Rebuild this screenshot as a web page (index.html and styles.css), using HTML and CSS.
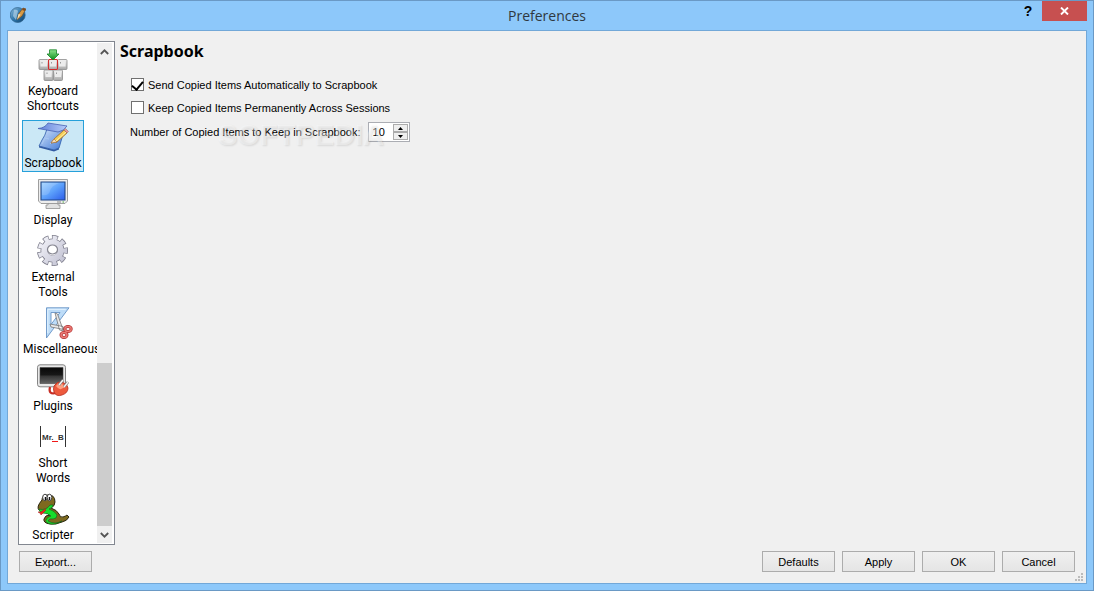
FILE: index.html
```html
<!DOCTYPE html>
<html lang="en">
<head>
    <meta charset="UTF-8">
    <meta name="viewport" content="width=device-width, initial-scale=1.0">
    <title>Preferences</title>
    <link rel="stylesheet" href="styles.css">
</head>
<body>
    <div class="window">

        <header class="titlebar">
            <svg class="app-icon" width="16" height="16" viewBox="0 0 16 16">
                <defs>
                    <linearGradient id="globe" x1="0" y1="0" x2="1" y2="1">
                        <stop offset="0" stop-color="#8fbcdc"/>
                        <stop offset=".5" stop-color="#2f78ad"/>
                        <stop offset="1" stop-color="#0c3f6c"/>
                    </linearGradient>
                </defs>
                <circle cx="7.7" cy="8" r="7.5" fill="url(#globe)" stroke="#30648c" stroke-width=".7"/>
                <path d="M4 3q3-1 4 1L6 13 3 9z" fill="#b9d7eb" opacity=".65"/>
                <path d="M7 13 8.500 7 13 1l3 1-4 7z" fill="#d79a45" stroke="#654521" stroke-width=".6"/>
                <path d="M7 13 8.500 7l2 .5z" fill="#f3e2bd"/>
                <path d="M13 1l3 1-1 2-3-1z" fill="#7a4a22"/>
            </svg>
            <h1 class="title">Preferences</h1>
            <div class="window-buttons">
                <button class="help" type="button" aria-label="Help">?</button>
                <button class="close" type="button" aria-label="Close">
                    <svg width="9" height="8" viewBox="0 0 9 8"><path d="M1 .5 8 7.500M8 .5 1 7.500" stroke="#fff" stroke-width="1.900"/></svg>
                </button>
            </div>
        </header>

        <div class="dialog">
            <div class="content">

                <div class="sidebar">
                    <nav class="sections">
                        <a class="section" href="#keyboard">
                            <svg class="icon" viewBox="0 0 32 32">
                                <defs>
                                    <linearGradient id="key" x1="0" y1="0" x2="0" y2="1">
                                        <stop offset="0" stop-color="#f4f4f4"/>
                                        <stop offset="1" stop-color="#a8a8a8"/>
                                    </linearGradient>
                                    <linearGradient id="down" x1="0" y1="0" x2="0" y2="1">
                                        <stop offset="0" stop-color="#8de28d"/>
                                        <stop offset="1" stop-color="#0a8f18"/>
                                    </linearGradient>
                                </defs>
                                <g fill="url(#key)" stroke="#8c8c8c" stroke-width=".8">
                                    <rect x="2" y="10.500" width="9.500" height="10" rx="1"/>
                                    <rect x="20.500" y="10.500" width="9.500" height="10" rx="1"/>
                                    <rect x="7" y="21" width="9" height="10.500" rx="1"/>
                                    <rect x="16.500" y="21" width="9" height="10.500" rx="1"/>
                                </g>
                                <rect x="11.500" y="10.500" width="9" height="10" rx="1" fill="url(#key)" stroke="#d22c2c" stroke-width="1.100"/>
                                <path d="M3.500 11.500h6.500v6H3.500zM22 11.500h6.500v6H22zM8.500 22h6v6h-6zM18 22h6v6h-6zM13 11.500h6v6h-6z" fill="#ececec"/>
                                <path d="M5 13v1.500M23.500 13v1.500M10 23.500V25M19.500 23.500V25M14.500 13v1.500" stroke="#999"/>
                                <path d="M12.500.8h7V5H22l-6 6-6-6h2.500z" fill="url(#down)" stroke="#19832a" stroke-width=".8"/>
                            </svg>
                            <span>Keyboard<br>Shortcuts</span>
                        </a>

                        <a class="section selected" href="#scrapbook" aria-current="page">
                            <svg class="icon" viewBox="0 0 32 32">
                                <defs>
                                    <linearGradient id="pad" x1="0" y1="0" x2="1" y2="1">
                                        <stop offset="0" stop-color="#d4e4fb"/>
                                        <stop offset="1" stop-color="#3f78d4"/>
                                    </linearGradient>
                                    <linearGradient id="flap" x1="0" y1="0" x2="1" y2="0">
                                        <stop offset="0" stop-color="#5f7fd8"/>
                                        <stop offset="1" stop-color="#b7cdfa"/>
                                    </linearGradient>
                                </defs>
                                <path d="M10 8Q8 15 5 19L2 25l15 4 5-2 5-17z" fill="url(#pad)" stroke="#2c5ca9" stroke-width=".8"/>
                                <path d="M2 25v1.500l15 4 5-2V27l-5 2z" fill="#3159a2"/>
                                <path d="M1 7.500Q8 7 11 2l19 3q-3 5-9 6z" fill="url(#flap)" stroke="#4661b2" stroke-width=".8"/>
                                <path d="M5 23 8 17l4 1M13 23l6-7" fill="none" stroke="#a9c8f2"/>
                                <path d="m14 22 3-4L27 9l3 3-10 9z" fill="#f6cf58" stroke="#9b672b" stroke-width=".8"/>
                                <path d="M19 20 29 11" stroke="#fff1a7"/>
                                <path d="m14 22 3-4 3 3z" fill="#f6dfc0" stroke="#9b672b" stroke-width=".5"/>
                                <path d="m27 9 1.500-1.500 3 3L30 12z" fill="#e59898" stroke="#9b6060" stroke-width=".5"/>
                            </svg>
                            <span>Scrapbook</span>
                        </a>

                        <a class="section" href="#display">
                            <svg class="icon" viewBox="0 0 32 32">
                                <defs>
                                    <linearGradient id="screen" x1="0" y1="0" x2="1" y2="1">
                                        <stop offset="0" stop-color="#a2d4ff"/>
                                        <stop offset=".5" stop-color="#5da1fb"/>
                                        <stop offset="1" stop-color="#2b5cea"/>
                                    </linearGradient>
                                </defs>
                                <path d="M11 24h10v3h2v3.500H9V27h2z" fill="#e2e2e2" stroke="#929292" stroke-width=".8"/>
                                <path d="M1.500 1.500h29V23L28 25.500H4L1.500 23z" fill="#ededed" stroke="#949494" stroke-width=".9"/>
                                <path d="M4 4h24v18H4z" fill="url(#screen)" stroke="#214785" stroke-width="1.100"/>
                                <path d="M5 5h17q-8 3-9 8T5 17z" fill="#fff" opacity=".15"/>
                                <path d="M20 24h4" stroke="#8b8b8b"/>
                                <path d="M25.500 24h1.500" stroke="#4dac43"/>
                            </svg>
                            <span>Display</span>
                        </a>

                        <a class="section" href="#tools">
                            <svg class="icon" viewBox="0 0 32 32">
                                <defs>
                                    <linearGradient id="gear" gradientUnits="userSpaceOnUse" x1="4" y1="2" x2="28" y2="30">
                                        <stop offset="0" stop-color="#f4f4fa"/>
                                        <stop offset="1" stop-color="#bfbfd0"/>
                                    </linearGradient>
                                </defs>
                                <!-- teeth are a dashed ring, darker copy below for the outline -->
                                <g fill="none" transform="rotate(-12 15.500 15.500)">
                                    <circle cx="15.500" cy="15.500" r="12.500" pathLength="90" stroke="#7e7e8c" stroke-width="6" stroke-dasharray="6.400 3.600"/>
                                    <circle cx="15.500" cy="15.500" r="8.500" stroke="#7e7e8c" stroke-width="7"/>
                                    <circle cx="15.500" cy="15.500" r="12.200" pathLength="90" stroke="url(#gear)" stroke-width="5" stroke-dasharray="5 5" stroke-dashoffset="-.7"/>
                                    <circle cx="15.500" cy="15.500" r="8.200" stroke="url(#gear)" stroke-width="6"/>
                                </g>
                                <ellipse cx="15.500" cy="14.500" rx="5" ry="4.500" fill="#fff" stroke="#858590" stroke-width="1.200"/>
                            </svg>
                            <span>External<br>Tools</span>
                        </a>

                        <a class="section" href="#misc">
                            <svg class="icon" viewBox="0 0 32 32">
                                <path fill-rule="evenodd" d="M9.500.8H32L9.500 31zM14 5.500v12L23 5.500z" fill="#bddcf8" stroke="#6693c5" stroke-width=".9"/>
                                <path d="M10.800 26V2.300h18" fill="none" stroke="#e5f4ff"/>
                                <path d="m18 6 2.500 1 6 17-4-1zM13 17l1 3 13 2.500-1-3z" fill="#e8e8e8" stroke="#777" stroke-width=".8"/>
                                <g fill="none" stroke="#b02e2e" stroke-width="3">
                                    <ellipse cx="31" cy="22" rx="3.200" ry="2.500"/>
                                    <ellipse cx="27" cy="28" rx="3" ry="2.500"/>
                                </g>
                                <g fill="none" stroke="#ec7b76" stroke-width="1.400">
                                    <ellipse cx="31" cy="22" rx="3.200" ry="2.500"/>
                                    <ellipse cx="27" cy="28" rx="3" ry="2.500"/>
                                </g>
                            </svg>
                            <span>Miscellaneous</span>
                        </a>

                        <a class="section" href="#plugins">
                            <svg class="icon" viewBox="0 0 32 32">
                                <defs>
                                    <linearGradient id="dark" x1="0" y1="0" x2="0" y2="1">
                                        <stop offset="0" stop-color="#080808"/>
                                        <stop offset=".45" stop-color="#171717"/>
                                        <stop offset=".55" stop-color="#363636"/>
                                        <stop offset="1" stop-color="#646464"/>
                                    </linearGradient>
                                </defs>
                                <rect x=".5" y=".8" width="28" height="22" rx="2.500" fill="#e8e8e8" stroke="#858585"/>
                                <path d="M3 3.500h23v16H3z" fill="url(#dark)" stroke="#444" stroke-width=".6"/>
                                <path d="M13 23q-2 8 6 6" fill="none" stroke="#c72d24" stroke-width="2.200"/>
                                <path d="M17 22q3-5 8-4 6 2 6 6 0 5-6 7t-8-3q-1-3 0-6z" fill="#ed5a3d" stroke="#b52c20" stroke-width=".8"/>
                                <path d="M19 22q3-4 6-2l4 3q-3 1-5 2t-5-3z" fill="#ff9f80"/>
                                <path d="m22 21 4-5M27 23l4-5" stroke="#777" stroke-width="2.800"/>
                                <path d="m22 21 4-5M27 23l4-5" stroke="#f2f2f2" stroke-width="1.500"/>
                            </svg>
                            <span>Plugins</span>
                        </a>

                        <a class="section" href="#short-words">
                            <svg class="icon" viewBox="0 0 32 32">
                                <path d="M3.500 5v21M28.500 5v21" stroke="#333"/>
                                <text class="icon-text" x="5" y="19">Mr.</text>
                                <text class="icon-text" x="21" y="19">B</text>
                                <path d="M15 20.500h6" stroke="#f01818"/>
                            </svg>
                            <span>Short<br>Words</span>
                        </a>

                        <a class="section" href="#scripter">
                            <svg class="icon" viewBox="0 0 32 32">
                                <!-- body -->
                                <path d="M5 7q0-5 5-5 8-1 8 7 0 4-4 6 6 2 8 6 1 4 4 3 3-1 4-2l2 2q-2 4-7 5-7 3-12 2-7-1-6-5 1-4 6-4-4-3-11-5-3-3 3-10z" fill="#7d691f" stroke="#2b2810"/>
                                <!-- belly -->
                                <path d="M2 16q7 2 11-4l3 0q0 3-4 4 6 2 8 6 0 4-4 4-4-1-5 2 7 4 14 0-6 4-11 3-6-1-5-4t5-4q-3-3-9-3-3-1-3-4z" fill="#16dd2b" stroke="#155f1b" stroke-width=".6"/>
                                <ellipse cx="8" cy="4.500" rx="2.300" ry="3.300" fill="#fff" stroke="#444"/>
                                <ellipse cx="12.500" cy="4.500" rx="2.300" ry="3.300" fill="#fff" stroke="#444"/>
                                <path d="M8.500 4v3M12.500 4v3" stroke="#111" stroke-width="1.500"/>
                                <path d="m8 16-4 3H1l2 1 1 2 5-5z" fill="#ed2424" stroke="#a51919" stroke-width=".5"/>
                            </svg>
                            <span>Scripter</span>
                        </a>
                    </nav>

                    <div class="scrollbar">
                        <button type="button" aria-label="Scroll up">
                            <svg width="9" height="6" viewBox="0 0 9 6"><path d="M.8 5 4.500 1.300 8.200 5" fill="none" stroke="#555" stroke-width="1.800"/></svg>
                        </button>
                        <div class="track"><div class="thumb"></div></div>
                        <button type="button" aria-label="Scroll down">
                            <svg width="9" height="6" viewBox="0 0 9 6"><path d="M.8 1 4.500 4.700 8.200 1" fill="none" stroke="#555" stroke-width="1.800"/></svg>
                        </button>
                    </div>
                </div>

                <main class="panel">
                    <h2>Scrapbook</h2>
                    <div class="options">
                        <label class="check"><input type="checkbox" checked>Send Copied Items Automatically to Scrapbook</label>
                        <label class="check"><input type="checkbox">Keep Copied Items Permanently Across Sessions</label>
                        <div class="number-row">
                            <label for="copies">Number of Copied Items to Keep in Scrapbook:</label>
                            <div class="spinner">
                                <input id="copies" type="number" value="10">
                                <div class="steps">
                                    <button type="button" aria-label="Increase"><svg width="5" height="3" viewBox="0 0 5 3"><path d="M0 3h5L2.500 0z"/></svg></button>
                                    <button type="button" aria-label="Decrease"><svg width="5" height="3" viewBox="0 0 5 3"><path d="M0 0h5L2.500 3z"/></svg></button>
                                </div>
                            </div>
                            <span class="watermark">SOFTPEDIA</span>
                        </div>
                    </div>
                </main>
            </div>

            <footer class="actions">
                <button class="export" type="button">Export...</button>
                <button type="button">Defaults</button>
                <button type="button">Apply</button>
                <button type="button">OK</button>
                <button type="button">Cancel</button>
            </footer>
            <svg class="grip" width="8" height="8" viewBox="0 0 8 8"><path d="M6 0h2v2H6zM3 3h2v2H3zM6 3h2v2H6zM0 6h2v2H0zM3 6h2v2H3zM6 6h2v2H6z" fill="#bbb"/></svg>
        </div>
    </div>
</body>
</html>
```

FILE: styles.css
```css
* {
    box-sizing: border-box;
}

body {
    margin: 0;
    font-family: "Liberation Sans", Arial, sans-serif;
    font-size: 11px;
    color: #000;
}

button {
    padding: 0;
    font: inherit;
    color: inherit;
}

.window {
    display: flex;
    flex-direction: column;
    height: 100vh;
    padding: 0 6px 6px;
    border: 1px solid #6a99c5;
    background: #8dc8fa;
}

/* title bar */
.titlebar {
    display: grid;
    grid-template-columns: 1fr auto 1fr;
    height: 29px;
    flex: none;
}

.app-icon {
    margin: 6px 0 0 3px;
}

.title {
    margin: 0;
    font: 14px/29px "Open Sans", sans-serif;
    color: #303840;
}

.window-buttons {
    display: flex;
    justify-content: flex-end;
    align-items: flex-start;
}

.window-buttons button {
    border: 0;
    height: 20px;
}

.help {
    width: 28px;
    background: none;
    font-size: 14px;
    font-weight: bold;
}

.window-buttons .close {
    width: 45px;
    background: #c75050;
}

/* dialog */
.dialog {
    position: relative;
    display: flex;
    flex-direction: column;
    flex: 1;
    min-height: 0;
    padding: 10px 10px 11px;
    border: 1px solid #72a8d8;
    background: #f0f0f0;
}

.content {
    display: flex;
    flex: 1;
    min-height: 0;
    gap: 5px;
}

.sidebar {
    display: flex;
    width: 97px;
    padding: 1px 2px 1px 0;
    border: 1px solid #828790;
    background: #fff;
}

.sections {
    display: flex;
    flex-direction: column;
    gap: 5px;
    flex: 1;
    min-width: 0;
    padding: 5px 0 0 3px;
    overflow: hidden;
}

.section {
    flex: none;
    width: 62px;
    border: 1px solid transparent;
    font: 12px/15px Roboto, sans-serif;
    text-align: center;
    text-decoration: none;
    color: #000;
}

.section.selected {
    border-color: #26a0da;
    background: #cbe8f6;
}

.section span {
    display: block;
    padding-top: 3px;
}

.icon {
    display: block;
    width: 32px;
    height: 32px;
    margin: 0 auto;
    overflow: visible;
}

.icon-text {
    font: bold 8px "Liberation Sans", sans-serif;
    fill: #333;
}

.scrollbar {
    display: flex;
    flex-direction: column;
    width: 15px;
    background: #f0f0f0;
}

.scrollbar button {
    display: flex;
    align-items: center;
    justify-content: center;
    height: 17px;
    border: 0;
    background: none;
}

.track {
    display: flex;
    flex-direction: column;
    justify-content: flex-end;
    flex: 1;
}

.thumb {
    height: 35%;
    background: #cdcdcd;
}

/* options */
.panel {
    flex: 1;
}

.panel h2 {
    margin: 0;
    font: bold 16px/20px "Noto Sans", sans-serif;
}

.options {
    padding: 12px 10px;
}

.check {
    display: flex;
    align-items: center;
    gap: 4px;
    height: 23px;
    padding-left: 1px;
}

.check input {
    appearance: none;
    display: grid;
    justify-content: center;
    width: 13px;
    height: 13px;
    margin: 0;
    border: 1px solid #707070;
    background: #fff;
}

.check input:checked::before {
    content: "";
    width: 5px;
    height: 9px;
    border: solid #000;
    border-width: 0 2px 2px 0;
    transform: rotate(40deg);
}

.number-row {
    position: relative;
    display: flex;
    align-items: center;
    gap: 7px;
    margin-top: 3px;
}

.spinner {
    display: flex;
    width: 42px;
    height: 20px;
    padding: 1px;
    border: 1px solid #abadb3;
    background: #fff;
}

.spinner input {
    appearance: textfield;
    flex: 1;
    min-width: 0;
    padding: 0 0 0 3px;
    border: 0;
    font: inherit;
    background: none;
}

.spinner input::-webkit-inner-spin-button {
    display: none;
}

.steps {
    display: flex;
    flex-direction: column;
    width: 15px;
}

.steps button {
    display: flex;
    align-items: center;
    justify-content: center;
    flex: 1;
    border: 1px solid #acacac;
    background: #efefef;
}

.watermark {
    position: absolute;
    top: 0;
    left: 88px;
    font: bold 29px/26px "Liberation Sans", sans-serif;
    color: rgba(255, 255, 255, 0.4);
    text-shadow: 1px 1px 2px rgba(0, 0, 0, 0.1);
    pointer-events: none;
}

/* bottom buttons */
.actions {
    display: flex;
    gap: 7px;
    padding: 6px 1px 0;
}

.actions button {
    width: 73px;
    height: 21px;
    border: 1px solid #acacac;
    background: linear-gradient(#f0f0f0, #e5e5e5);
}

.actions .export {
    margin-right: auto;
}

.grip {
    position: absolute;
    right: 3px;
    bottom: 2px;
}
```
